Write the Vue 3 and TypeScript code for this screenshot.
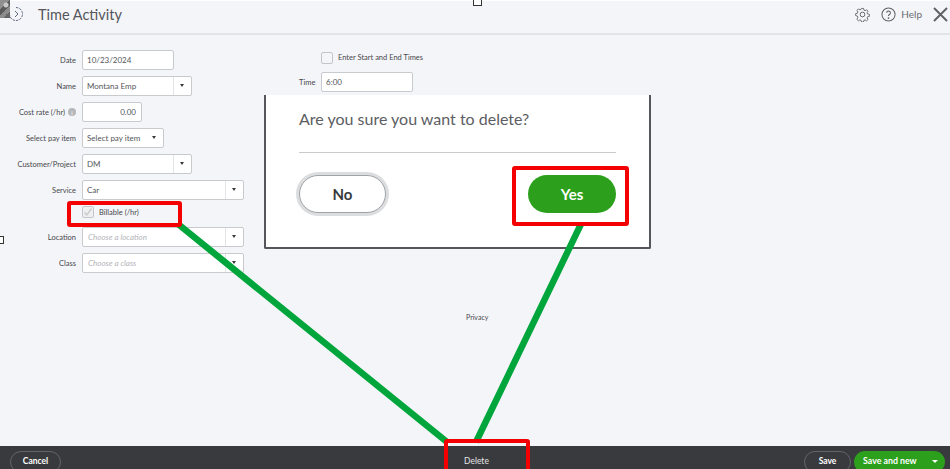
<script setup lang="ts">
interface FormRow {
  label: string;
  value: string;
  width: number;
  select?: boolean;
  placeholder?: boolean;
  align?: 'right';
  info?: boolean;
}

const rowsTop: FormRow[] = [
  { label: 'Date', value: '10/23/2024', width: 92 },
  { label: 'Name', value: 'Montana Emp', width: 110, select: true },
  { label: 'Cost rate (/hr)', value: '0.00', width: 60, align: 'right', info: true },
  { label: 'Select pay item', value: 'Select pay item', width: 82, select: true },
  { label: 'Customer/Project', value: 'DM', width: 110, select: true },
  { label: 'Service', value: 'Car', width: 162, select: true },
];

const rowsBottom: FormRow[] = [
  { label: 'Location', value: 'Choose a location', width: 162, select: true, placeholder: true },
  { label: 'Class', value: 'Choose a class', width: 162, select: true, placeholder: true },
];
</script>

<template>
  <div class="page">
    <header class="topbar">
      <div class="topbar__left">
        <svg class="topbar__clock" width="16" height="16" viewBox="0 0 16 16" fill="none" stroke="#5f6a80" stroke-width="1">
          <path d="M8 1.5a6.5 6.5 0 1 1-6.5 6.5" stroke-dasharray="2.5 1" />
          <path d="M7 5l3 3-3 3" />
        </svg>
        <h1>Time Activity</h1>
      </div>
      <div class="topbar__right">
        <svg width="15" height="15" viewBox="0 0 16 16" fill="none" stroke="#5f6066" stroke-width="1">
          <circle cx="8" cy="8" r="2.5" />
          <path d="M6.8 1h2.4l.4 2 1.3.6 1.8-1.1 1.6 1.7-1.1 1.7.6 1.4 2 .4v2.4l-2 .4-.6 1.3 1.1 1.8-1.7 1.6-1.7-1.1-1.4.6-.4 2H6.8l-.4-2-1.4-.6-1.7 1.1-1.7-1.6L2.700 11l-.6-1.300-2-.4V6.900l2-.4.6-1.400L1.600 3.200l1.700-1.700L5 2.600l1.400-.6z" transform="translate(.6 .6) scale(.93)" />
        </svg>
        <span class="help">
          <svg width="15" height="15" viewBox="0 0 16 16" fill="none" stroke="#5f6066" stroke-width="1.1">
            <circle cx="8" cy="8" r="7" />
            <path d="M6 6.2a2 2 0 1 1 3 1.800c-.7.4-1 .8-1 1.600" />
            <circle cx="8" cy="11.800" r=".4" />
          </svg>
          Help
        </span>
        <svg width="15" height="15" viewBox="0 0 15 15" stroke="#5f6066" stroke-width="1.900">
          <path d="M1 1l13 13M14 1L1 14" />
        </svg>
      </div>
    </header>

    <main class="content">
      <section class="form">
        <div v-for="row in rowsTop" :key="row.label" class="row">
          <label class="row__label">
            {{ row.label }}
            <span v-if="row.info" class="info">i</span>
          </label>
          <div class="field" :class="{ 'field--right': row.align === 'right' }" :style="{ width: row.width + 'px' }">
            <span class="field__value">{{ row.value }}</span>
            <span v-if="row.select" class="field__arrow" :class="{ 'field__arrow--plain': row.label === 'Select pay item' }"></span>
          </div>
        </div>

        <div class="row row--check">
          <span class="row__label"></span>
          <span class="check check--on">
            <svg width="10" height="10" viewBox="0 0 10 10" fill="none" stroke="#c9cacc" stroke-width="1.400">
              <path d="M1.500 5.500l2.300 2.500 4.700-6.500" />
            </svg>
          </span>
          <span class="check-label">Billable (/hr)</span>
        </div>

        <div v-for="row in rowsBottom" :key="row.label" class="row">
          <label class="row__label">{{ row.label }}</label>
          <div class="field" :style="{ width: row.width + 'px' }">
            <span class="field__value field__value--placeholder">{{ row.value }}</span>
            <span class="field__arrow"></span>
          </div>
        </div>
      </section>

      <section class="times">
        <div class="times__check">
          <span class="check"></span>
          <span class="times__text">Enter Start and End Times</span>
        </div>
        <div class="times__row">
          <label class="times__label">Time</label>
          <div class="field times__field"><span class="field__value">6:00</span></div>
        </div>
      </section>
    </main>

    <div class="dialog">
      <p class="dialog__text">Are you sure you want to delete?</p>
      <hr class="dialog__rule" />
      <div class="dialog__actions">
        <button type="button" class="dialog__no">No</button>
        <button type="button" class="dialog__yes">Yes</button>
      </div>
    </div>

    <a class="privacy">Privacy</a>

    <footer class="footer">
      <button type="button" class="pill pill--cancel">Cancel</button>
      <span class="footer__delete">Delete</span>
      <div class="footer__right">
        <button type="button" class="pill pill--save">Save</button>
        <div class="save-new">
          <span>Save and new</span>
          <span class="save-new__arrow"></span>
        </div>
      </div>
    </footer>

    <!-- screenshot leftovers -->
    <div class="glitch"></div>
    <span class="handle handle--top"></span>
    <span class="handle handle--left"></span>

    <!-- red and green markup drawn over the screen -->
    <svg class="markup" width="950" height="469" viewBox="0 0 950 469" fill="none">
      <path d="M178 224L447 442M581 224L476 442" stroke="#00a63c" stroke-width="6.500" />
      <rect x="69" y="203" width="111" height="22" rx="1" stroke="#f40000" stroke-width="4" />
      <rect x="514" y="168" width="113" height="56" rx="1" stroke="#f40000" stroke-width="4" />
      <rect x="446" y="441" width="82" height="40" rx="1" stroke="#f40000" stroke-width="4" />
    </svg>
  </div>
</template>

<style>
html,
body {
  margin: 0;
  overflow: hidden;
}
</style>

<style scoped>
.page {
  position: relative;
  display: flex;
  flex-direction: column;
  width: 950px;
  height: 469px;
  overflow: hidden;
  background: #f4f5f8;
  font-family: Lato, "Open Sans", sans-serif;
  color: #393a3d;
}

.topbar {
  display: flex;
  align-items: center;
  justify-content: space-between;
  box-sizing: border-box;
  height: 35px;
  padding: 0 2px 6px 8px;
  border-top: 1px solid #fff;
  border-bottom: 2px solid #e3e4e7;
}

.topbar__left {
  display: flex;
  align-items: center;
  gap: 14px;
}

.topbar__left h1 {
  margin: 0;
  font-size: 14.500px;
  font-weight: 400;
  color: #55565b;
}

.topbar__right {
  display: flex;
  align-items: center;
  gap: 11px;
}

.help {
  display: flex;
  align-items: center;
  gap: 5px;
  font-size: 10px;
  color: #6b6c72;
}

.content {
  display: flex;
  flex: 1;
  min-height: 0;
  padding-top: 15px;
}

.form {
  display: flex;
  flex-direction: column;
  gap: 6px;
  width: 299px;
}

.row {
  display: flex;
  align-items: center;
  gap: 6px;
  height: 20px;
}

.row__label {
  display: flex;
  align-items: center;
  justify-content: flex-end;
  gap: 3px;
  width: 76px;
  font-size: 7.500px;
  white-space: nowrap;
  color: #47484c;
}

.info {
  display: inline-flex;
  align-items: center;
  justify-content: center;
  width: 8px;
  height: 8px;
  border-radius: 50%;
  background: #b5b6ba;
  font-size: 6px;
  color: #fff;
}

.field {
  display: flex;
  align-items: center;
  box-sizing: border-box;
  height: 20px;
  border: 1px solid #c9cacd;
  border-radius: 2px;
  background: #fff;
  font-size: 8px;
  color: #55565b;
}

.field--right {
  justify-content: flex-end;
}

.field__value {
  flex: 1;
  padding: 0 5px 0 4px;
  white-space: nowrap;
}

.field--right .field__value {
  text-align: right;
}

.field__value--placeholder {
  padding-left: 5px;
  font-style: italic;
  color: #b3b4b8;
}

.field__arrow {
  position: relative;
  flex: none;
  align-self: stretch;
  width: 17px;
  border-left: 1px solid #e3e4e7;
}

.field__arrow--plain {
  border-left: 0;
}

.field__arrow::after {
  content: "";
  position: absolute;
  top: 7px;
  left: 6px;
  border-top: 3px solid #393a3d;
  border-left: 2.500px solid transparent;
  border-right: 2.500px solid transparent;
}

.row--check {
  height: 14px;
  margin: -1px 0 2px;
}

.check {
  display: flex;
  align-items: center;
  justify-content: center;
  box-sizing: border-box;
  width: 12px;
  height: 12px;
  border: 1px solid #c4c5c9;
  border-radius: 2px;
  background: #f4f5f8;
}

.check--on {
  background: #eeeff1;
}

.check-label {
  margin-left: -1px;
  font-size: 7.500px;
  color: #47484c;
}

.times {
  display: flex;
  flex-direction: column;
  gap: 8px;
  padding-top: 2px;
}

.times__check {
  display: flex;
  align-items: center;
  gap: 5px;
  margin-left: 22px;
}

.times__text {
  margin-top: -1px;
  font-size: 7.500px;
  color: #47484c;
}

.times__row {
  display: flex;
  align-items: center;
  gap: 6px;
}

.times__label {
  width: 16px;
  font-size: 7.500px;
  color: #47484c;
}

.times__field {
  width: 92px;
}

.dialog {
  position: absolute;
  top: 95px;
  left: 264px;
  box-sizing: border-box;
  width: 387px;
  height: 154px;
  padding: 14px 33px 0;
  border: 2px solid #55565b;
  border-top: 0;
  border-radius: 0 0 2px 2px;
  background: #fff;
}

.dialog__text {
  margin: 0;
  font-size: 16px;
  line-height: 20px;
  color: #5c5d62;
}

.dialog__rule {
  height: 1px;
  margin: 23px 0 22px;
  border: 0;
  background: #c9cacd;
}

.dialog__actions {
  display: flex;
  align-items: center;
  justify-content: space-between;
}

.dialog__no,
.dialog__yes {
  box-sizing: border-box;
  height: 38px;
  border-radius: 19px;
  font-family: inherit;
  font-size: 15px;
  font-weight: 700;
}

.dialog__no {
  width: 87px;
  border: 1px solid #a0a2a6;
  background: #fff;
  box-shadow: 0 0 0 3px #dcdddf;
  color: #393a3d;
}

.dialog__yes {
  width: 88px;
  border: 0;
  background: #2ca01c;
  color: #fff;
}

.privacy {
  position: absolute;
  top: 313px;
  left: 466px;
  font-size: 7px;
  color: #47484c;
}

.footer {
  position: relative;
  display: flex;
  align-items: center;
  justify-content: space-between;
  box-sizing: border-box;
  height: 23px;
  padding: 4px 5px 0 10px;
  background: #393a3d;
  color: #fff;
}

.pill {
  box-sizing: border-box;
  height: 22px;
  margin-bottom: -4px;
  padding-bottom: 2px;
  border: 1px solid #63646a;
  border-radius: 11px;
  background: transparent;
  font-family: inherit;
  font-size: 8.500px;
  font-weight: 700;
  color: #fff;
}

.pill--cancel {
  width: 51px;
}

.pill--save {
  width: 47px;
}

.footer__delete {
  position: absolute;
  top: 10px;
  left: 464px;
  font-size: 8.500px;
  color: #e3e4e7;
}

.footer__right {
  display: flex;
  align-items: center;
  gap: 3px;
}

.save-new {
  display: flex;
  align-items: center;
  justify-content: space-between;
  box-sizing: border-box;
  width: 91px;
  height: 22px;
  margin-bottom: -4px;
  padding: 0 7px 2px 9px;
  border-radius: 11px;
  background: #2ca01c;
  font-size: 8.800px;
  font-weight: 700;
}

.save-new__arrow {
  margin-top: 2px;
  border-top: 3px solid #fff;
  border-left: 3px solid transparent;
  border-right: 3px solid transparent;
}

.glitch {
  position: absolute;
  top: 0;
  left: 0;
  width: 10px;
  height: 18px;
  background:
    radial-gradient(circle at 6px 5px, #c9c9c9 0 2px, transparent 3px),
    linear-gradient(135deg, #8f8f8f 0 35%, #5a5a5a 35% 55%, #8c8c8c 55% 75%, #666 75%);
}

.handle {
  position: absolute;
  box-sizing: border-box;
  border: 1px solid #333;
  background: #fff;
}

.handle--top {
  top: -3px;
  left: 473px;
  width: 9px;
  height: 9px;
}

.handle--left {
  top: 236px;
  left: -4px;
  width: 8px;
  height: 8px;
}

.markup {
  position: absolute;
  top: 0;
  left: 0;
  pointer-events: none;
}
</style>
